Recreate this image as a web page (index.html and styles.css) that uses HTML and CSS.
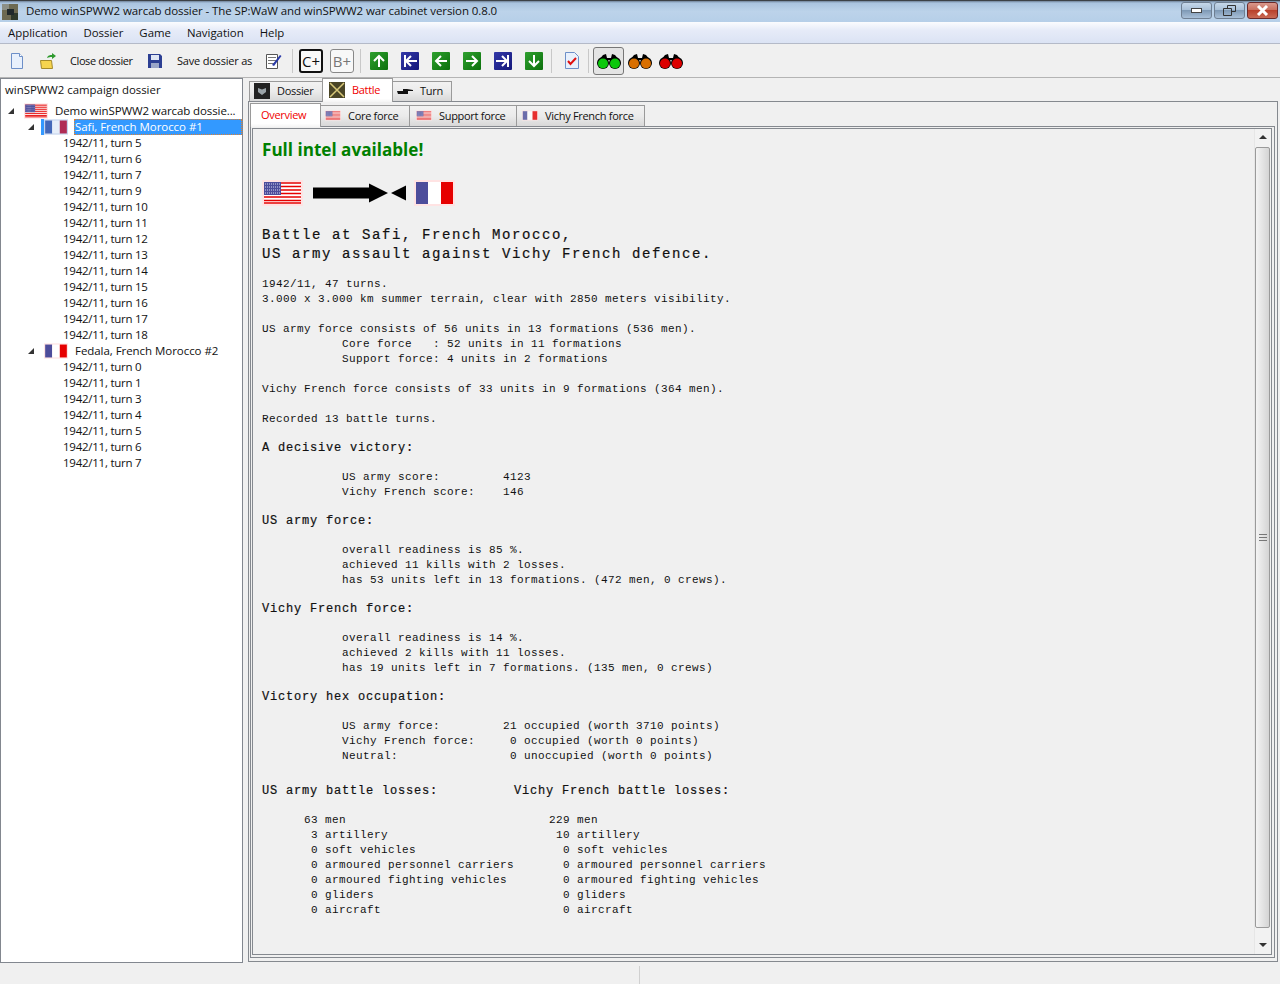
FILE: index.html
```html
<!DOCTYPE html>
<html lang="en">
<head>
    <meta charset="UTF-8">
    <title>Demo winSPWW2 warcab dossier</title>
    <link rel="stylesheet" href="styles.css">
</head>
<body>
    <svg width="0" height="0" class="defs">
        <defs>
            <symbol id="flag-us" viewBox="0 0 41 26">
                <rect width="41" height="26" fill="#ffe3e3"/>
                <rect x="2" y="2" width="37" height="22" fill="#fff"/>
                <path d="M2 3h37M2 6.500h37M2 10h37M2 13.500h37M2 17h37M2 20.500h37M2 23h37" stroke="#e60000" stroke-width="1.700"/>
                <rect x="2" y="2" width="17" height="13" fill="#4d4d9b"/>
                <path d="M3 4h15M3 7h15M3 10h15M3 13h15" stroke="#d8d8ee" stroke-width="1" stroke-dasharray="1 1"/>
            </symbol>
            <symbol id="flag-fr" viewBox="0 0 41 26">
                <rect width="41" height="26" fill="#ffe3e3"/>
                <rect x="2" y="2" width="12" height="22" fill="#4d4d9b"/>
                <rect x="14" y="2" width="13" height="22" fill="#fff"/>
                <rect x="27" y="2" width="12" height="22" fill="#e60000"/>
            </symbol>
            <symbol id="flag-fr-sel" viewBox="0 0 41 26">
                <rect width="41" height="26" fill="#c6d4ee"/>
                <rect x="2" y="2" width="12" height="22" fill="#4468b8"/>
                <rect x="14" y="2" width="13" height="22" fill="#e6eef9"/>
                <rect x="27" y="2" width="12" height="22" fill="#b02c55"/>
            </symbol>
            <symbol id="binoculars" viewBox="0 0 26 16">
                <path d="M3 7l4-5 3-1 1 4h4l1-4 3 1 4 5z" fill="#000"/>
                <circle cx="7" cy="10" r="6" fill="#000"/>
                <circle cx="19" cy="10" r="6" fill="#000"/>
                <circle cx="7" cy="10.500" r="5" fill="currentColor"/>
                <circle cx="19" cy="10.500" r="5" fill="currentColor"/>
            </symbol>
            <symbol id="arrow-up" viewBox="0 0 18 18"><path d="M9 15V4M4 9l5-5 5 5" fill="none" stroke="#fff" stroke-width="2"/></symbol>
            <symbol id="arrow-down" viewBox="0 0 18 18"><path d="M9 3v11M4 9l5 5 5-5" fill="none" stroke="#fff" stroke-width="2"/></symbol>
            <symbol id="arrow-left" viewBox="0 0 18 18"><path d="M15 9H4M9 4L4 9l5 5" fill="none" stroke="#fff" stroke-width="2"/></symbol>
            <symbol id="arrow-right" viewBox="0 0 18 18"><path d="M3 9h11M9 4l5 5-5 5" fill="none" stroke="#fff" stroke-width="2"/></symbol>
            <symbol id="arrow-first" viewBox="0 0 18 18"><path d="M4 3v12M16 9H5M10 4L5 9l5 5" fill="none" stroke="#fff" stroke-width="2"/></symbol>
            <symbol id="arrow-last" viewBox="0 0 18 18"><path d="M14 3v12M2 9h11M8 4l5 5-5 5" fill="none" stroke="#fff" stroke-width="2"/></symbol>
        </defs>
    </svg>

    <div class="titlebar">
        <svg class="app-icon" width="16" height="16" viewBox="0 0 16 16">
            <rect width="16" height="16" fill="#6d6a52"/>
            <rect y="0" width="7" height="6" fill="#8c8f86"/>
            <rect x="9" y="9" width="7" height="7" fill="#2f3a2c"/>
            <rect x="5" y="5" width="7" height="6" fill="#20292c"/>
        </svg>
        <span class="title-text">Demo winSPWW2 warcab dossier - The SP:WaW and winSPWW2 war cabinet version 0.8.0</span>
        <div class="win-buttons">
            <div class="win-btn"><span class="min-glyph"></span></div>
            <div class="win-btn">
                <svg width="13" height="11" viewBox="0 0 13 11"><path d="M4.500 3V.5h8v6H9M.5 3.500h8v7h-8z" fill="none" stroke="#333" stroke-width="1"/></svg>
            </div>
            <div class="win-btn close">
                <svg width="13" height="11" viewBox="0 0 13 11"><path d="M2 1l9 9M11 1l-9 9" stroke="#fff" stroke-width="3"/></svg>
            </div>
        </div>
    </div>

    <div class="menubar">
        <span>Application</span>
        <span>Dossier</span>
        <span>Game</span>
        <span>Navigation</span>
        <span>Help</span>
    </div>

    <div class="toolbar">
        <svg class="icon-new" width="16" height="18" viewBox="0 0 16 18"><path d="M2.500 1.500h8l3 3v12h-11z" fill="#e8f0fc" stroke="#6d8fc8"/><path d="M10.500 1.500v3h3" fill="#fff" stroke="#6d8fc8"/></svg>
        <svg class="icon-open" width="18" height="18" viewBox="0 0 18 18"><path d="M1.500 8.500h11l1 8h-11z" fill="#f6d44e" stroke="#a58a2a"/><path d="M8 6c1-3 3-3 5-3V1l4 3-4 3V5c-2 0-3 0-5 1z" fill="#2f9a2f"/></svg>
        <span class="tool-text close-text">Close dossier</span>
        <svg class="icon-save" width="16" height="16" viewBox="0 0 16 16"><path d="M1 1h12l2 2v12H1z" fill="#2c3f93"/><rect x="4" y="2" width="8" height="5" fill="#dfe6f5"/><rect x="4" y="10" width="8" height="5" fill="#9aa6c8"/></svg>
        <span class="tool-text save-text">Save dossier as</span>
        <svg class="icon-note" width="17" height="18" viewBox="0 0 17 18"><path d="M1.500 2.500h11v14h-11z" fill="#fff" stroke="#555"/><path d="M3 5.500h8M3 8.500h8M3 11.500h6" stroke="#777"/><path d="M7 13l8-10 1.500 1L9 14z" fill="#2a3aa8"/></svg>
        <span class="sep"></span>
        <span class="key-btn dark">C+</span>
        <span class="key-btn">B+</span>
        <span class="sep"></span>
        <div class="nav-group">
            <svg class="nav-btn green" width="18" height="18"><use href="#arrow-up"/></svg>
            <svg class="nav-btn blue" width="18" height="18"><use href="#arrow-first"/></svg>
            <svg class="nav-btn green" width="18" height="18"><use href="#arrow-left"/></svg>
            <svg class="nav-btn green" width="18" height="18"><use href="#arrow-right"/></svg>
            <svg class="nav-btn blue" width="18" height="18"><use href="#arrow-last"/></svg>
            <svg class="nav-btn green" width="18" height="18"><use href="#arrow-down"/></svg>
        </div>
        <span class="sep"></span>
        <svg class="icon-report" width="14" height="17" viewBox="0 0 14 17"><path d="M.5.500h9l4 4v12H.500z" fill="#e8f0fc" stroke="#6d8fc8"/><path d="M3 9l2.500 3L11 6" fill="none" stroke="#e01010" stroke-width="2"/></svg>
        <span class="sep"></span>
        <div class="bino-group">
            <span class="bino-btn active"><svg class="bino-green" width="26" height="16"><use href="#binoculars"/></svg></span>
            <span class="bino-btn"><svg class="bino-orange" width="26" height="16"><use href="#binoculars"/></svg></span>
            <span class="bino-btn"><svg class="bino-red" width="26" height="16"><use href="#binoculars"/></svg></span>
        </div>
    </div>

    <div class="main">
        <div class="tree">
            <div class="tree-head">winSPWW2 campaign dossier</div>
            <div class="tree-row root">
                <span class="tri"></span>
                <svg class="tree-flag" width="24" height="16"><use href="#flag-us"/></svg>
                <span>Demo winSPWW2 warcab dossie...</span>
            </div>
            <div class="tree-row battle selected">
                <span class="tri"></span>
                <span class="sel-bar"></span>
                <svg class="tree-flag" width="24" height="16"><use href="#flag-fr-sel"/></svg>
                <span class="sel-label">Safi, French Morocco #1</span>
            </div>
            <div class="tree-row turn">1942/11, turn 5</div>
            <div class="tree-row turn">1942/11, turn 6</div>
            <div class="tree-row turn">1942/11, turn 7</div>
            <div class="tree-row turn">1942/11, turn 9</div>
            <div class="tree-row turn">1942/11, turn 10</div>
            <div class="tree-row turn">1942/11, turn 11</div>
            <div class="tree-row turn">1942/11, turn 12</div>
            <div class="tree-row turn">1942/11, turn 13</div>
            <div class="tree-row turn">1942/11, turn 14</div>
            <div class="tree-row turn">1942/11, turn 15</div>
            <div class="tree-row turn">1942/11, turn 16</div>
            <div class="tree-row turn">1942/11, turn 17</div>
            <div class="tree-row turn">1942/11, turn 18</div>
            <div class="tree-row battle">
                <span class="tri"></span>
                <svg class="tree-flag" width="24" height="16"><use href="#flag-fr"/></svg>
                <span>Fedala, French Morocco #2</span>
            </div>
            <div class="tree-row turn">1942/11, turn 0</div>
            <div class="tree-row turn">1942/11, turn 1</div>
            <div class="tree-row turn">1942/11, turn 3</div>
            <div class="tree-row turn">1942/11, turn 4</div>
            <div class="tree-row turn">1942/11, turn 5</div>
            <div class="tree-row turn">1942/11, turn 6</div>
            <div class="tree-row turn">1942/11, turn 7</div>
        </div>

        <div class="right">
            <div class="tabs top-tabs">
                <div class="tab tab-dossier">
                    <svg width="16" height="16" viewBox="0 0 16 16"><rect width="16" height="16" fill="#222"/><path d="M4 5l4 1.500L12 5v4l-4 3-4-3z" fill="#9aa3a8"/></svg>
                    Dossier
                </div>
                <div class="tab active tab-battle">
                    <svg width="16" height="16" viewBox="0 0 16 16"><rect width="16" height="16" fill="#4a4526"/><path d="M1 1l14 14M15 1L1 15" stroke="#d8c878" stroke-width="1.500"/></svg>
                    <span class="red">Battle</span>
                </div>
                <div class="tab tab-turn">
                    <svg width="16" height="8" viewBox="0 0 16 8"><path d="M0 4h6V2h4l6 1v1h-5v3H1z" fill="#111"/></svg>
                    Turn
                </div>
            </div>
            <div class="tab-body">
                <div class="tabs sub-tabs">
                    <div class="tab active tab-overview"><span class="red">Overview</span></div>
                    <div class="tab tab-core"><svg class="small-flag" width="16" height="11"><use href="#flag-us"/></svg>Core force</div>
                    <div class="tab tab-support"><svg class="small-flag" width="16" height="11"><use href="#flag-us"/></svg>Support force</div>
                    <div class="tab tab-vichy"><svg class="small-flag" width="16" height="11"><use href="#flag-fr"/></svg>Vichy French force</div>
                </div>
                <div class="sub-body">
                    <div class="report-box">
                        <div class="report">
                            <h1 class="intel">Full intel available!</h1>
                            <div class="flag-line">
                                <svg width="41" height="26"><use href="#flag-us"/></svg>
                                <svg class="arrows" width="93" height="20" viewBox="0 0 93 20"><path d="M0 4.500h56V.5l19 9.500-19 9.500v-4H0zM78 10l15-7.500v15z" fill="#000"/></svg>
                                <svg class="flag-right" width="41" height="26"><use href="#flag-fr"/></svg>
                            </div>
<pre class="big">Battle at Safi, French Morocco,
US army assault against Vichy French defence.</pre>
<pre class="small">1942/11, 47 turns.
3.000 x 3.000 km summer terrain, clear with 2850 meters visibility.

US army force consists of 56 units in 13 formations (536 men).</pre>
<pre class="small indent">           Core force   : 52 units in 11 formations
           Support force: 4 units in 2 formations</pre>
<pre class="small intro-end">

Vichy French force consists of 33 units in 9 formations (364 men).

Recorded 13 battle turns.</pre>
<pre class="mid">A decisive victory:</pre>
<pre class="small indent">           US army score:         4123
           Vichy French score:    146</pre>
<pre class="mid">US army force:</pre>
<pre class="small indent">           overall readiness is 85 %.
           achieved 11 kills with 2 losses.
           has 53 units left in 13 formations. (472 men, 0 crews).</pre>
<pre class="mid">Vichy French force:</pre>
<pre class="small indent">           overall readiness is 14 %.
           achieved 2 kills with 11 losses.
           has 19 units left in 7 formations. (135 men, 0 crews)</pre>
<pre class="mid">Victory hex occupation:</pre>
<pre class="small indent">           US army force:         21 occupied (worth 3710 points)
           Vichy French force:     0 occupied (worth 0 points)
           Neutral:                0 unoccupied (worth 0 points)</pre>
<pre class="mid losses-head">US army battle losses:         <span class="vichy-head">Vichy French battle losses:</span></pre>
<pre class="small">      63 men                             229 men
       3 artillery                        10 artillery
       0 soft vehicles                     0 soft vehicles
       0 armoured personnel carriers       0 armoured personnel carriers
       0 armoured fighting vehicles        0 armoured fighting vehicles
       0 gliders                           0 gliders
       0 aircraft                          0 aircraft</pre>
                        </div>
                        <div class="scrollbar">
                            <span class="arrow-up"></span>
                            <div class="thumb"><span class="grip"></span></div>
                            <span class="arrow-down"></span>
                        </div>
                    </div>
                </div>
            </div>
        </div>
    </div>

    <div class="statusbar"><span class="status-cell"></span></div>
</body>
</html>
```

FILE: styles.css
```css
html, body {
    margin: 0;
    padding: 0;
}

body {
    width: 1280px;
    height: 984px;
    overflow: hidden;
    background: #f0f0f0;
    color: #111;
    font-family: "Open Sans", "Noto Sans", sans-serif;
    font-size: 11px;
    display: flex;
    flex-direction: column;
}

.defs {
    position: absolute;
}

svg {
    flex: none;
    display: block;
}

/* window frame */
.titlebar {
    height: 22px;
    display: flex;
    align-items: center;
    padding-left: 2px;
    background: linear-gradient(to bottom, #6f8298 0, #a9c3de 2px, #bcd3ea 50%, #b6cfe8 100%);
    border-top: 1px solid #3c4146;
    box-sizing: border-box;
}

.app-icon {
    margin-right: 8px;
}

.title-text {
    flex: 1;
    font-size: 11.500px;
    letter-spacing: -0.09px;
    color: #111;
    padding-bottom: 2px;
}

.win-buttons {
    display: flex;
    gap: 2px;
    margin-right: 2px;
    align-self: flex-start;
    margin-top: 1px;
}

.win-btn {
    width: 29px;
    height: 15px;
    border: 1px solid #6f7f92;
    border-radius: 3px;
    background: linear-gradient(to bottom, #c6d8ea 0, #a9c0d8 45%, #7f9ab6 50%, #a9c0d8 100%);
    display: flex;
    align-items: center;
    justify-content: center;
}

.win-btn.close {
    border-color: #6b2a2a;
    background: linear-gradient(to bottom, #d9988c 0, #c8705f 45%, #b9412c 50%, #c96a55 100%);
}

.min-glyph {
    width: 9px;
    height: 3px;
    background: #fff;
    border: 1px solid #444;
}

.menubar {
    height: 22px;
    display: flex;
    align-items: center;
    gap: 16px;
    padding-left: 8px;
    background: linear-gradient(to bottom, #fbfcfe 0, #e6ebf8 40%, #dbe3f4 100%);
    border-bottom: 1px solid #b4bac8;
    box-sizing: border-box;
    font-size: 11.400px;
}

.toolbar {
    height: 33px;
    display: flex;
    align-items: center;
    padding-left: 9px;
    border-bottom: 1px solid #b4b4b4;
}

.icon-new { margin-right: 14px; }
.icon-open { margin-right: 13px; }
.icon-save { margin-right: 14px; }
.icon-note { margin-right: 10px; }
.icon-report { margin-right: 9px; margin-left: 13px; }

.tool-text {
    white-space: nowrap;
    padding-bottom: 1px;
}

.close-text {
    width: 63px;
    margin-right: 14px;
    letter-spacing: -0.4px;
}

.save-text {
    width: 76px;
    margin-right: 12px;
    letter-spacing: -0.2px;
}

.sep {
    width: 1px;
    height: 24px;
    background: #c8c8c8;
}

.key-btn {
    width: 22px;
    height: 22px;
    margin-right: 7px;
    border: 1px solid #888;
    border-radius: 3px;
    background: #f8f8f8;
    color: #777;
    font-size: 15px;
    display: flex;
    align-items: center;
    justify-content: center;
}

.key-btn.dark {
    border: 2px solid #111;
    width: 20px;
    height: 20px;
    color: #111;
    margin-left: 6px;
}

.key-btn:not(.dark) {
    margin-right: 6px;
}

.nav-group {
    display: flex;
    gap: 13px;
    margin: 0 8px 0 9px;
}

.nav-btn {
    border-radius: 1px;
}

.nav-btn.green {
    background: linear-gradient(135deg, #2ea02e, #0c700c);
}

.nav-btn.blue {
    background: linear-gradient(135deg, #3338a8, #14187a);
}

.bino-group {
    display: flex;
    margin-left: 4px;
}

.bino-btn {
    width: 31px;
    height: 28px;
    display: flex;
    align-items: center;
    justify-content: center;
    box-sizing: border-box;
}

.bino-btn.active {
    border: 1px solid #777;
    border-radius: 3px;
    background: #e4e4e4;
}

.bino-green { color: #0dc80d; }
.bino-orange { color: #d96f00; }
.bino-red { color: #dc0000; }

/* main split */
.main {
    flex: 1;
    display: flex;
    min-height: 0;
}

.tree {
    width: 243px;
    margin-bottom: 1px;
    background: #fff;
    border: 1px solid #82878f;
    box-sizing: border-box;
    overflow: hidden;
}

.tree-head {
    height: 22px;
    line-height: 22px;
    padding-left: 4px;
    font-size: 11.400px;
    box-sizing: border-box;
}

.tree-row {
    height: 16px;
    line-height: 16px;
    display: flex;
    align-items: center;
    white-space: nowrap;
    font-size: 11.500px;
    letter-spacing: -0.05px;
}

.tree-row.root {
    padding-left: 7px;
    height: 20px;
    margin-bottom: -2px;
    letter-spacing: -0.1px;
}

.tree-row.battle {
    padding-left: 27px;
}

.tree-row.turn {
    padding-left: 62px;
    letter-spacing: -0.25px;
}

.tri {
    width: 0;
    height: 0;
    border-left: 6px solid transparent;
    border-bottom: 6px solid #333;
    margin-right: 10px;
}

.tree-flag {
    margin-right: 7px;
}

.selected .tri {
    margin-right: 7px;
}

.sel-bar {
    width: 3px;
    height: 16px;
    background: #3399ff;
}

.sel-label {
    flex: 1;
    margin-left: -1px;
    padding-left: 1px;
    background: #3399ff;
    color: #fff;
    outline: 1px dotted #e08030;
    outline-offset: -1px;
}

/* right side */
.right {
    flex: 1;
    margin-left: 5px;
    margin-right: 2px;
    display: flex;
    flex-direction: column;
    min-width: 0;
}

.tabs {
    display: flex;
    align-items: flex-end;
    flex: none;
    position: relative;
    z-index: 1;
}

.tab {
    display: flex;
    align-items: center;
    box-sizing: border-box;
    border: 1px solid #9a9a9a;
    border-bottom: 0;
    background: linear-gradient(to bottom, #f2f2f2 0, #ebebeb 50%, #d8d8d8 100%);
    margin-right: -1px;
    padding-bottom: 2px;
    gap: 7px;
    white-space: nowrap;
    letter-spacing: -0.3px;
}

.tab.active {
    background: linear-gradient(to bottom, #fff 0, #fff 85%, #f4f4f4 100%);
    position: relative;
    z-index: 1;
    margin-bottom: -1px;
}

.red {
    color: #f00000;
}

.top-tabs {
    height: 23px;
    padding-left: 1px;
}

.top-tabs .tab {
    height: 20px;
}

.top-tabs .tab.active {
    height: 24px;
}

.tab-dossier { width: 74px; padding-left: 4px; }
.tab-battle { width: 71px; padding-left: 6px; }
.tab-turn { width: 60px; padding-left: 4px; }

.tab-body {
    flex: 1;
    border: 1px solid #85898f;
    margin-bottom: 2px;
    padding: 1px 2px 3px 1px;
    display: flex;
    flex-direction: column;
    min-height: 0;
    box-sizing: border-box;
}

.sub-tabs {
    height: 23px;
}

.sub-tabs .tab {
    height: 21px;
}

.sub-tabs .tab.active {
    height: 24px;
}

.tab-overview { width: 71px; padding-left: 10px; }
.tab-core { width: 90px; padding-left: 4px; }
.tab-support { width: 108px; padding-left: 6px; }
.tab-vichy { width: 129px; padding-left: 5px; }

.small-flag {
    opacity: 0.8;
}

.sub-body {
    flex: 1;
    border: 1px solid #85898f;
    padding: 1px 2px 2px 1px;
    min-height: 0;
    display: flex;
}

.report-box {
    flex: 1;
    border: 1px solid #85898f;
    display: flex;
    min-width: 0;
}

.report {
    flex: 1;
    padding: 8px 0 0 9px;
    min-width: 0;
    overflow: hidden;
}

/* report text */
.intel {
    margin: 0 0 18px;
    color: #008000;
    font-family: "Open Sans", sans-serif;
    font-size: 17.100px;
    font-weight: 700;
    line-height: 25px;
}

.flag-line {
    display: flex;
    align-items: center;
    height: 26px;
    margin-bottom: 20px;
}

.arrows {
    margin-left: 10px;
}

.flag-right {
    margin-left: 8px;
}

pre {
    margin: 0;
    font-family: "Liberation Mono", "Courier New", monospace;
    color: #111;
}

.big {
    font-size: 14px;
    letter-spacing: 1.600px;
    line-height: 19px;
    margin-bottom: 13px;
    -webkit-text-stroke: 0.2px #111;
}

.small {
    font-size: 11px;
    letter-spacing: 0.4px;
    line-height: 15px;
}

.indent {
    padding-left: 3px;
}

.intro-end {
    margin-bottom: 1px;
}

.mid {
    font-size: 12px;
    letter-spacing: 0.8px;
    line-height: 17px;
    margin: 13px 0 13px;
    -webkit-text-stroke: 0.2px #111;
}

.losses-head {
    margin-top: 19px;
}

.vichy-head {
    margin-left: 4px;
}

/* scrollbar */
.scrollbar {
    width: 17px;
    display: flex;
    flex-direction: column;
    align-items: flex-start;
    background: #f2f2f2;
    border-left: 1px solid #e6e6e6;
    box-sizing: border-box;
}

.arrow-up, .arrow-down {
    width: 0;
    height: 0;
    align-self: center;
    border-left: 4px solid transparent;
    border-right: 4px solid transparent;
}

.arrow-up {
    border-bottom: 4px solid #333;
    margin: 6px 0 8px;
}

.arrow-down {
    border-top: 4px solid #333;
    margin: 6px 0 7px;
}

.thumb {
    flex: 1;
    width: 15px;
    margin-bottom: 9px;
    border: 1px solid #9a9a9a;
    border-radius: 2px;
    background: linear-gradient(to right, #f4f4f4, #d4d4d4);
    box-sizing: border-box;
    display: flex;
    align-items: center;
    justify-content: center;
}

.grip {
    width: 8px;
    height: 5px;
    border-top: 1px solid #777;
    border-bottom: 1px solid #777;
    background: linear-gradient(to bottom, transparent 2px, #777 2px, #777 3px, transparent 3px);
}

/* status */
.statusbar {
    height: 20px;
    flex: none;
    padding-left: 639px;
    padding-top: 2px;
    box-sizing: border-box;
}

.status-cell {
    display: block;
    width: 1px;
    height: 18px;
    background: #d0d0d0;
}
```
